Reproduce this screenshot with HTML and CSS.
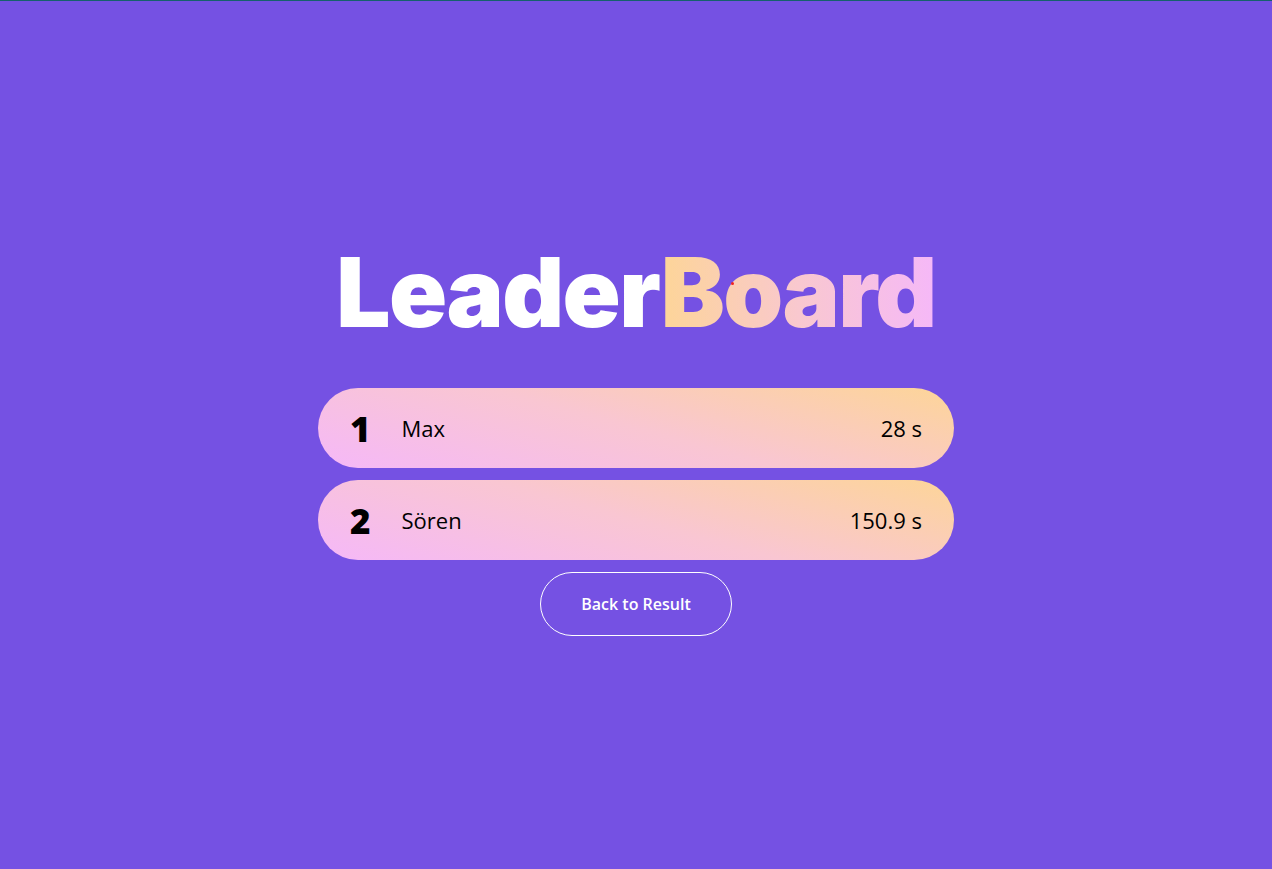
FILE: index.html
```html
<!DOCTYPE html>
<html lang="en">
<head>
<meta charset="utf-8">
<title>LeaderBoard</title>
<link rel="stylesheet" href="styles.css">
</head>
<body>
<main class="page">
  <h1 class="title"><span class="title-white">Leader</span><span class="title-grad">Board</span><span class="dot"></span></h1>
  <ol class="board">
    <li class="row">
      <span class="rank">1</span>
      <span class="name">Max</span>
      <span class="time">28 s</span>
    </li>
    <li class="row">
      <span class="rank">2</span>
      <span class="name">Sören</span>
      <span class="time">150.9 s</span>
    </li>
  </ol>
  <button class="back">Back to Result</button>
</main>
</body>
</html>
```
FILE: styles.css
```css
html, body {
  margin: 0;
  padding: 0;
  height: 100%;
}
body {
  background: #7551e3;
  border-top: 1px solid #16606c;
  box-sizing: border-box;
  font-family: "Open Sans", "Noto Sans", sans-serif;
}
.page {
  display: flex;
  flex-direction: column;
  align-items: center;
  padding-top: 237px;
}
.title {
  position: relative;
  margin: 0;
  font-family: Inter, sans-serif;
  font-weight: 900;
  font-size: 96px;
  line-height: 108px;
  letter-spacing: -1.6px;
}
.title-white {
  color: #ffffff;
}
.title-grad {
  background: linear-gradient(90deg, #fdd598 0%, #f9c8cf 50%, #f5b8f8 100%);
  -webkit-background-clip: text;
  background-clip: text;
  color: transparent;
}
.dot {
  position: absolute;
  left: 395px;
  top: 44px;
  width: 3px;
  height: 3px;
  border-radius: 50%;
  background: #ee2222;
}
.board {
  list-style: none;
  margin: 42px 0 0;
  padding: 0;
  display: flex;
  flex-direction: column;
  gap: 12px;
}
.row {
  width: 636px;
  height: 80px;
  box-sizing: border-box;
  border-radius: 40px;
  background: linear-gradient(15deg, #f5b8f8 0%, #f9c6d2 50%, #fdd598 100%);
  display: flex;
  align-items: center;
  padding: 0 32px;
  color: #000;
}
.rank {
  font-weight: 800;
  font-size: 35px;
  margin-right: 31px;
  margin-left: 0;
}
.name {
  flex: 1;
  font-size: 22px;
}
.time {
  font-size: 22px;
}
.back {
  margin-top: 12px;
  width: 192px;
  height: 64px;
  border: 1px solid #ffffff;
  border-radius: 32px;
  background: transparent;
  color: #ffffff;
  font-family: "Open Sans", "Noto Sans", sans-serif;
  font-weight: 600;
  font-size: 16px;
}
```
